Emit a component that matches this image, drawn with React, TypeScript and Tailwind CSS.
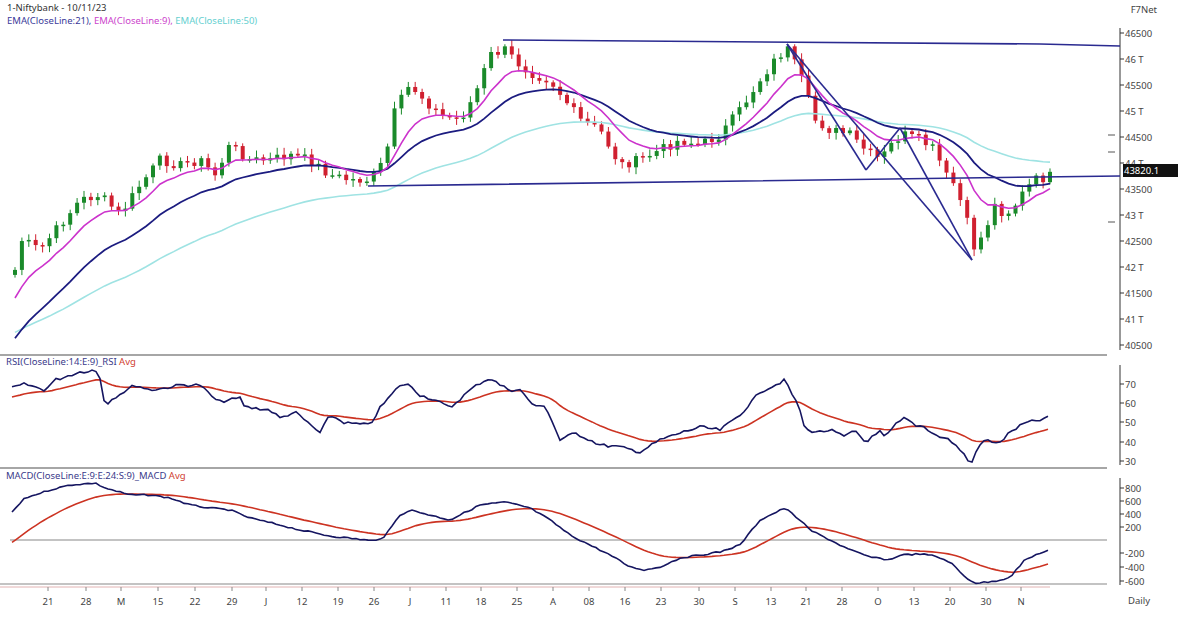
import React from "react";

type P = [number, number];
const interp = (pts: P[], x: number) => {
  if (x <= pts[0][0]) return pts[0][1];
  for (let i = 1; i < pts.length; i++) {
    if (x <= pts[i][0]) {
      const [x0, y0] = pts[i - 1];
      const [x1, y1] = pts[i];
      return y0 + ((y1 - y0) * (x - x0)) / (x1 - x0);
    }
  }
  return pts[pts.length - 1][1];
};
let seed = 7;
const rnd = () => {
  seed = (seed * 9301 + 49297) % 233280;
  return seed / 233280;
};

const priceK: P[] = [[15,270],[22,240],[40,250],[60,225],[80,200],[100,195],[120,215],[140,185],[160,160],[180,165],[200,160],[215,175],[230,145],[250,160],[270,160],[290,155],[310,160],[330,175],[350,180],[370,180],[385,160],[395,110],[410,85],[425,100],[440,115],[460,120],[475,95],[490,55],[505,50],[520,65],[535,75],[550,80],[565,100],[580,120],[600,130],[620,165],[640,160],[660,150],[680,140],[700,145],[720,135],[740,110],[760,80],[775,60],[787,48],[800,75],[815,120],[830,130],[850,135],[865,150],[880,160],[895,140],[905,135],[920,140],[935,150],[945,175],[955,185],[965,215],[975,250],[985,230],[995,205],[1005,215],[1015,205],[1025,190],[1035,180],[1045,178],[1050,176]];

const rsiK: P[] = [[12,388],[25,384],[45,390],[55,380],[80,372],[95,370],[100,378],[105,405],[115,397],[135,385],[150,390],[165,388],[180,385],[200,385],[218,402],[240,398],[245,407],[270,410],[280,418],[295,412],[320,433],[330,415],[345,423],[370,425],[380,408],[400,385],[410,385],[420,395],[435,400],[450,408],[470,390],[480,383],[490,378],[500,385],[510,390],[520,390],[535,407],[545,405],[560,440],[575,433],[590,440],[600,445],[620,447],[640,452],[660,440],[680,433],[700,427],[720,430],[740,415],[760,392],[775,385],[785,380],[800,410],[805,430],[820,432],[830,430],[845,437],[855,430],[865,442],[880,432],[885,438],[895,425],[905,418],[915,425],[925,427],[935,435],[950,440],[965,455],[970,465],[980,445],[985,440],[1000,443],[1010,432],[1025,423],[1040,420],[1050,417]];

const macdK: P[] = [[12,512],[25,498],[50,490],[70,485],[95,483],[105,488],[130,495],[150,495],[170,498],[190,505],[210,508],[230,510],[250,518],[280,525],[300,530],[330,536],[375,541],[385,536],[400,515],[410,510],[430,515],[450,520],[480,505],[505,502],[530,508],[550,520],[570,535],[590,545],[610,555],[630,567],[645,570],[660,567],[680,558],[700,555],[720,552],[740,545],[760,520],[785,508],[800,520],[810,530],[830,540],[850,550],[870,557],[890,560],[900,555],[920,554],[935,556],[950,562],[965,577],[975,583],[990,582],[1000,580],[1010,577],[1025,560],[1040,553],[1050,550]];

const xs: number[] = [];
for (let x = 15; x <= 1050; x += 6.9) xs.push(x);

const closes = xs.map((x) => interp(priceK, x) + (rnd() - 0.5) * 10);
const ema = (arr: number[], n: number, init: number) => {
  const k = 2 / (n + 1);
  let e = init;
  return arr.map((v) => (e = e + k * (v - e)));
};
const e9 = ema(closes, 9, 305);
const e21 = ema(closes, 21, 345);
const e50 = ema(closes, 50, 335);
const line = (ys: number[], xx: number[] = xs) =>
  ys.map((y, i) => `${i ? "L" : "M"}${xx[i].toFixed(1)},${y.toFixed(1)}`).join(" ");

const rx: number[] = [];
for (let x = 12; x <= 1050; x += 4) rx.push(x);
const rsi = rx.map((x) => interp(rsiK, x) + (rnd() - 0.5) * 3);
const rsiAvg = ema(rsi, 22, 398);
const macd = rx.map((x) => interp(macdK, x) + (rnd() - 0.5) * 1.5);
const macdAvg = ema(macd, 24, 545);

const priceTicks: [string, number][] = [["46500",33],["46 T",59],["45500",85],["45 T",111],["44500",137],["44 T",163],["43500",189],["43 T",215],["42500",241],["42 T",267],["41500",293],["41 T",319],["40500",345]];
const rsiTicks: [string, number][] = [["70",384],["60",403],["50",422],["40",442],["30",461]];
const macdTicks: [string, number][] = [["800",488],["600",501],["400",514],["200",527],["-200",553],["-400",567],["-600",581]];
const xLabels: [string, number][] = [["21",48],["28",86],["M",121],["15",158],["22",195],["29",232],["J",266],["12",302],["19",338],["26",374],["J",410],["11",446],["18",481],["25",517],["A",553],["08",589],["16",625],["23",661],["30",699],["S",735],["13",771],["21",806],["28",842],["O",878],["13",914],["20",950],["30",986],["N",1021]];

const T = "text-[9.5px] fill-[#444]";

function Axis({ ticks, y1, y2 }: { ticks: [string, number][]; y1: number; y2: number }) {
  return (
    <g>
      <line x1={1120} y1={y1} x2={1120} y2={y2} stroke="#333" />
      {ticks.map(([t, y]) => (
        <g key={t}>
          <line x1={1120} y1={y} x2={1124} y2={y} stroke="#333" />
          <text x={1125} y={y + 3.5} className={T}>{t}</text>
        </g>
      ))}
    </g>
  );
}

export default function App() {
  return (
    <div className="w-[1178px] h-[617px] bg-white flex flex-col overflow-hidden font-['DejaVu_Sans',Verdana,sans-serif]">
      <div className="h-[26px] flex justify-between px-[7px] pt-[1px] text-[9.5px] leading-[13px]">
        <div>
          <div className="text-[#333]">1-Niftybank - 10/11/23</div>
          <div>
            <span className="text-[#3a3a9a]">EMA(CloseLine:21), </span>
            <span className="text-[#cc44cc]">EMA(CloseLine:9), </span>
            <span className="text-[#66d0d0]">EMA(CloseLine:50)</span>
          </div>
        </div>
        <div className="text-[#444] pr-[14px] pt-[2px]">F7Net</div>
      </div>
      <svg width={1178} height={591} viewBox="0 26 1178 591" className="block">
        <line x1={0} y1={355} x2={1107} y2={355} stroke="#888" strokeWidth={1.5} />
        <line x1={0} y1={468} x2={1107} y2={468} stroke="#888" strokeWidth={1.5} />
        <line x1={10} y1={540} x2={1107} y2={540} stroke="#888" strokeWidth={1.2} />
        <line x1={0} y1={584} x2={1107} y2={584} stroke="#888" strokeWidth={1.2} />
        <line x1={0} y1={587} x2={1050} y2={587} stroke="#d9a0a0" strokeWidth={0.8} />
        <Axis ticks={priceTicks} y1={28} y2={350} />
        {[135, 152, 222].map((y) => (
          <line key={y} x1={1108} y1={y} x2={1115} y2={y} stroke="#555" />
        ))}
        <Axis ticks={rsiTicks} y1={365} y2={465} />
        <Axis ticks={macdTicks} y1={478} y2={585} />
        {xs.map((x, i) => {
          const c = closes[i];
          const o = i ? closes[i - 1] : c + 5;
          const up = c < o;
          const top = Math.min(o, c);
          const bot = Math.max(o, c);
          const col = up ? "#1a8a2a" : "#d02030";
          return (
            <g key={i}>
              <line x1={x} y1={top - 2 - rnd() * 5} x2={x} y2={bot + 2 + rnd() * 5} stroke={col} strokeWidth={1} />
              <rect x={x - 2} y={top} width={4} height={Math.max(bot - top, 1.5)} fill={col} />
            </g>
          );
        })}
        <path d={line(e50)} fill="none" stroke="#9fe3e3" strokeWidth={1.6} />
        <path d={line(e21)} fill="none" stroke="#1c1c80" strokeWidth={1.8} />
        <path d={line(e9)} fill="none" stroke="#cc33cc" strokeWidth={1.6} />
        <g stroke="#2a2a90" strokeWidth={1.6} fill="none">
          <polyline points="503,40 1040,44 1120,46" />
          <polyline points="368,186 1040,177 1120,176" />
          <line x1={787} y1={44} x2={972} y2={260} />
          <line x1={787} y1={44} x2={866} y2={170} />
          <line x1={866} y1={170} x2={900} y2={128} />
          <line x1={900} y1={128} x2={972} y2={260} />
        </g>
        <rect x={1123} y={164} width={55} height={13} fill="#111" />
        <text x={1124} y={174} className="text-[9.5px] fill-white">43820.1</text>
        <text x={6} y={365} className="text-[9.5px] fill-[#3a3a8a]">RSI(CloseLine:14:E:9)_RSI <tspan className="fill-[#d04030]">Avg</tspan></text>
        <path d={line(rsiAvg, rx)} fill="none" stroke="#cc3322" strokeWidth={1.6} />
        <path d={line(rsi, rx)} fill="none" stroke="#151560" strokeWidth={1.6} />
        <text x={6} y={479} className="text-[9.5px] fill-[#3a3a8a]">MACD(CloseLine:E:9:E:24:S:9)_MACD <tspan className="fill-[#d04030]">Avg</tspan></text>
        <path d={line(macdAvg, rx)} fill="none" stroke="#cc3322" strokeWidth={1.6} />
        <path d={line(macd, rx)} fill="none" stroke="#151560" strokeWidth={1.6} />
        {xLabels.map(([t, x], i) => (
          <g key={i}>
            <line x1={x} y1={587} x2={x} y2={591} stroke="#888" />
            <text x={x} y={605} textAnchor="middle" className={T}>{t}</text>
          </g>
        ))}
        <text x={1128} y={604} className={T}>Daily</text>
      </svg>
    </div>
  );
}
